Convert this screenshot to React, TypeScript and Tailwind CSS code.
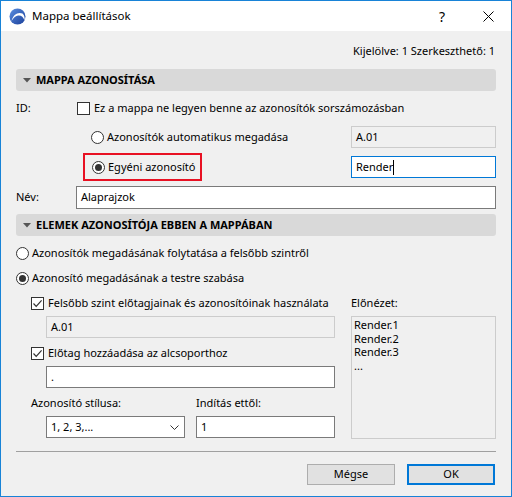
import React from 'react';

const font = "font-['Noto_Sans',sans-serif]";

function Radio({ checked }: { checked?: boolean }) {
  return (
    <span className="w-[13px] h-[13px] rounded-full border border-[#333333] bg-white flex items-center justify-center shrink-0">
      {checked && <span className="w-[7px] h-[7px] rounded-full bg-[#333333]" />}
    </span>
  );
}

function Check({ checked }: { checked?: boolean }) {
  return (
    <span className="w-[13px] h-[13px] border border-[#333333] bg-white flex items-center justify-center shrink-0">
      {checked && (
        <svg width="11" height="11" viewBox="0 0 11 11">
          <path d="M1.5 5.5 L4.2 8.3 L9.6 2.4" fill="none" stroke="#333333" strokeWidth="1.2" />
        </svg>
      )}
    </span>
  );
}

function SectionHeader({ title }: { title: string }) {
  return (
    <div className="h-[22px] bg-[#d9d9d9] rounded-[3px] flex items-center pl-[7px]">
      <svg width="8" height="5" viewBox="0 0 8 5" className="mr-[5px]">
        <path d="M0 0 H8 L4 4.5 Z" fill="#555555" />
      </svg>
      <span className="font-bold text-[11px] text-black">{title}</span>
    </div>
  );
}

function TextBox({ value, className = '', disabled, focused }: { value: string; className?: string; disabled?: boolean; focused?: boolean }) {
  const look = disabled
    ? 'bg-[#f0f0f0] border-[#cccccc]'
    : focused
    ? 'bg-white border-[#0078d7]'
    : 'bg-white border-[#7a7a7a]';
  return (
    <div className={`h-[22px] border ${look} flex items-center px-[4px] text-black ${className}`}>
      {value}
      {focused && <span className="w-px h-[15px] bg-black" />}
    </div>
  );
}

function AppIcon() {
  return (
    <svg width="17" height="17" viewBox="0 0 17 17">
      <defs>
        <linearGradient id="g" x1="0" y1="0" x2="1" y2="1">
          <stop offset="0" stopColor="#5b8fe0" />
          <stop offset="1" stopColor="#1a3f9a" />
        </linearGradient>
      </defs>
      <circle cx="8.5" cy="8.5" r="8" fill="url(#g)" />
      <path d="M2.5 13 C4 6.5 9 3.5 13.5 5.5 C15.5 7 16 10 15.5 12.5 C14.5 9 12 7 9 7.5 C6 8 4 10.5 2.5 13 Z" fill="#ffffff" />
    </svg>
  );
}

export default function App() {
  return (
    <div className={`w-[512px] h-[497px] border border-[#1883d7] bg-[#f0f0f0] flex flex-col text-[11px] text-black whitespace-nowrap ${font}`}>
      {/* Title bar */}
      <div className="h-[30px] bg-white flex items-center shrink-0">
        <div className="pl-[8px] pr-[6px] flex items-center">
          <AppIcon />
        </div>
        <span className="text-[11.5px] text-black">Mappa beállítások</span>
        <span className="ml-auto w-[46px] text-center text-[14px]">?</span>
        <span className="w-[46px] flex justify-center">
          <svg width="11" height="11" viewBox="0 0 11 11">
            <path d="M0.5 0.5 L10.5 10.5 M10.5 0.5 L0.5 10.5" stroke="#000" strokeWidth="1" />
          </svg>
        </span>
      </div>

      <div className="px-[15px] flex flex-col">
        <div className="mt-[12px] h-[16px] flex items-center justify-end pr-[1px]">Kijelölve: 1 Szerkeszthető: 1</div>

        <div className="mt-[10px]">
          <SectionHeader title="MAPPA AZONOSÍTÁSA" />
        </div>

        <div className="mt-[7px] h-[20px] flex items-center">
          <span className="w-[61px]">ID:</span>
          <Check />
          <span className="ml-[4px]">Ez a mappa ne legyen benne az azonosítók sorszámozásban</span>
        </div>

        <div className="mt-[8px] h-[22px] flex items-center pl-[67px]">
          <div className="flex items-center gap-[3px] px-[8px]">
            <Radio />
            <span>Azonosítók automatikus megadása</span>
          </div>
          <TextBox value="A.01" disabled className="ml-auto w-[145px]" />
        </div>

        <div className="mt-[5px] h-[28px] flex items-center pl-[67px]">
          <div className="h-[28px] flex items-center gap-[3px] pl-[7px] pr-[5px] border-2 border-[#e81123]">
            <Radio checked />
            <span>Egyéni azonosító</span>
          </div>
          <TextBox value="Render" focused className="ml-auto w-[145px]" />
        </div>

        <div className="mt-[5px] h-[23px] flex items-center">
          <span className="w-[60px]">Név:</span>
          <TextBox value="Alaprajzok" className="flex-1 h-[23px]" />
        </div>

        <div className="mt-[5px]">
          <SectionHeader title="ELEMEK AZONOSÍTÓJA EBBEN A MAPPÁBAN" />
        </div>

        <div className="mt-[8px] h-[18px] flex items-center gap-[3px]">
          <Radio />
          <span>Azonosítók megadásának folytatása a felsőbb szintről</span>
        </div>

        <div className="mt-[7px] h-[18px] flex items-center gap-[3px]">
          <Radio checked />
          <span>Azonosító megadásának a testre szabása</span>
        </div>

        <div className="mt-[7px] flex gap-[16px]">
          <div className="w-[304px] ml-[15px] flex flex-col">
            <div className="h-[18px] flex items-center gap-[4px]">
              <Check checked />
              <span>Felsőbb szint előtagjainak és azonosítóinak használata</span>
            </div>
            <TextBox value="A.01" disabled className="mt-[4px] ml-[15px]" />
            <div className="mt-[6px] h-[18px] flex items-center gap-[4px]">
              <Check checked />
              <span>Előtag hozzáadása az alcsoporthoz</span>
            </div>
            <TextBox value="." className="mt-[4px] ml-[15px]" />
            <div className="mt-[6px] h-[18px] flex items-center">
              <span className="w-[165px]">Azonosító stílusa:</span>
              <span>Indítás ettől:</span>
            </div>
            <div className="mt-[4px] flex ml-[15px] gap-[11px]">
              <div className="w-[139px] h-[22px] border border-[#7a7a7a] bg-white flex items-center pl-[4px] pr-[5px]">
                <span>1, 2, 3,...</span>
                <svg width="9" height="5" viewBox="0 0 9 5" className="ml-auto">
                  <path d="M0.5 0.5 L4.5 4.5 L8.5 0.5" fill="none" stroke="#333" strokeWidth="1" />
                </svg>
              </div>
              <TextBox value="1" className="w-[139px]" />
            </div>
          </div>

          <div className="flex-1 flex flex-col">
            <div className="h-[18px] flex items-center">Előnézet:</div>
            <div className="mt-[4px] h-[123px] border border-[#cccccc] bg-[#f0f0f0] px-[2px] pt-[1px] leading-[13.5px]">
              <div>Render.1</div>
              <div>Render.2</div>
              <div>Render.3</div>
              <div>...</div>
            </div>
          </div>
        </div>

        <div className="mt-[12px] h-px bg-[#a0a0a0]" />

        <div className="mt-[12px] flex justify-end gap-[12px] pr-[1px]">
          <button className="w-[88px] h-[21px] border border-[#adadad] bg-[#e1e1e1] text-[11px]">Mégse</button>
          <button className="w-[88px] h-[21px] border-2 border-[#0078d7] bg-[#e1e1e1] text-[11px]">OK</button>
        </div>
      </div>
    </div>
  );
}
